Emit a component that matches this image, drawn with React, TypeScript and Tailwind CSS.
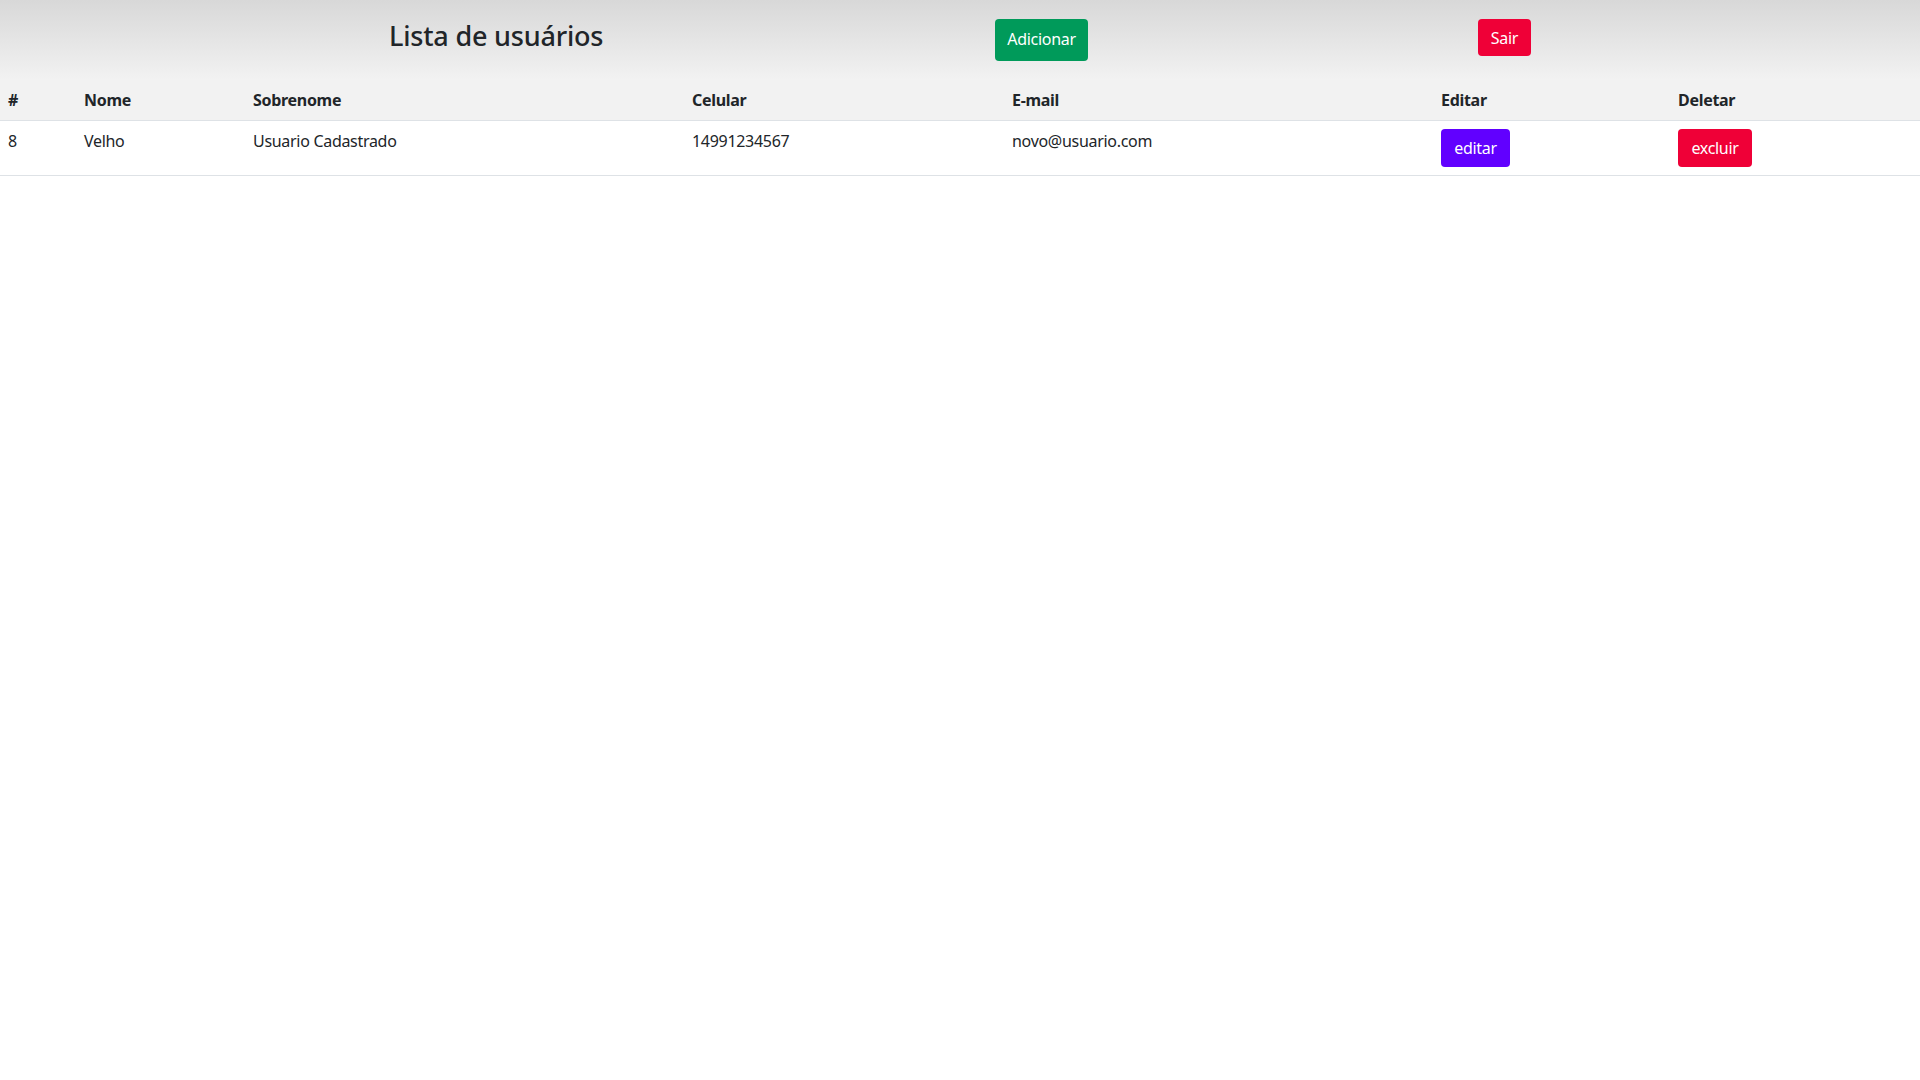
import React from "react";

const font = { fontFamily: '"Noto Sans", "Open Sans", sans-serif' };

export default function App() {
  return (
    <div className="min-h-screen bg-white text-[#212529]" style={font}>
      <header className="flex h-[80px] items-start bg-gradient-to-b from-[#d8d8d8] to-[#f2f2f2]">
        <div className="w-[995px] pl-[389px] pt-[20px]">
          <h2 className="text-[27px] font-medium leading-[1.2] tracking-[-0.2px]">Lista de usuários</h2>
        </div>
        <button className="mt-[19px] h-[42px] w-[93px] rounded-[4px] bg-[#009a5a] pb-[2px] text-[16px] tracking-[-0.3px] text-white">
          Adicionar
        </button>
        <button className="ml-[390px] mt-[19px] h-[37px] w-[53px] rounded-[4px] bg-[#ef0037] text-[16px] tracking-[-0.3px] text-white">
          Sair
        </button>
      </header>
      <table className="w-full table-fixed border-collapse text-[16px] leading-[24px] tracking-[-0.3px]">
        <colgroup>
          <col className="w-[76px]" />
          <col className="w-[169px]" />
          <col className="w-[439px]" />
          <col className="w-[320px]" />
          <col className="w-[429px]" />
          <col className="w-[237px]" />
          <col />
        </colgroup>
        <thead>
          <tr className="border-b border-[#dee2e6] bg-[#f2f2f2] text-left">
            <th className="p-2 align-top font-bold">#</th>
            <th className="p-2 align-top font-bold">Nome</th>
            <th className="p-2 align-top font-bold">Sobrenome</th>
            <th className="p-2 align-top font-bold">Celular</th>
            <th className="p-2 align-top font-bold">E-mail</th>
            <th className="p-2 align-top font-bold">Editar</th>
            <th className="p-2 align-top font-bold">Deletar</th>
          </tr>
        </thead>
        <tbody>
          <tr className="border-b border-[#dee2e6]">
            <td className="p-2 align-top">8</td>
            <td className="p-2 align-top">Velho</td>
            <td className="p-2 align-top">Usuario Cadastrado</td>
            <td className="p-2 align-top">14991234567</td>
            <td className="p-2 align-top">novo@usuario.com</td>
            <td className="p-2 align-top">
              <button className="h-[38px] w-[69px] rounded-[4px] bg-[#6100ff] text-white">editar</button>
            </td>
            <td className="p-2 align-top">
              <button className="h-[38px] w-[74px] rounded-[4px] bg-[#ef0037] text-white">excluir</button>
            </td>
          </tr>
        </tbody>
      </table>
    </div>
  );
}
